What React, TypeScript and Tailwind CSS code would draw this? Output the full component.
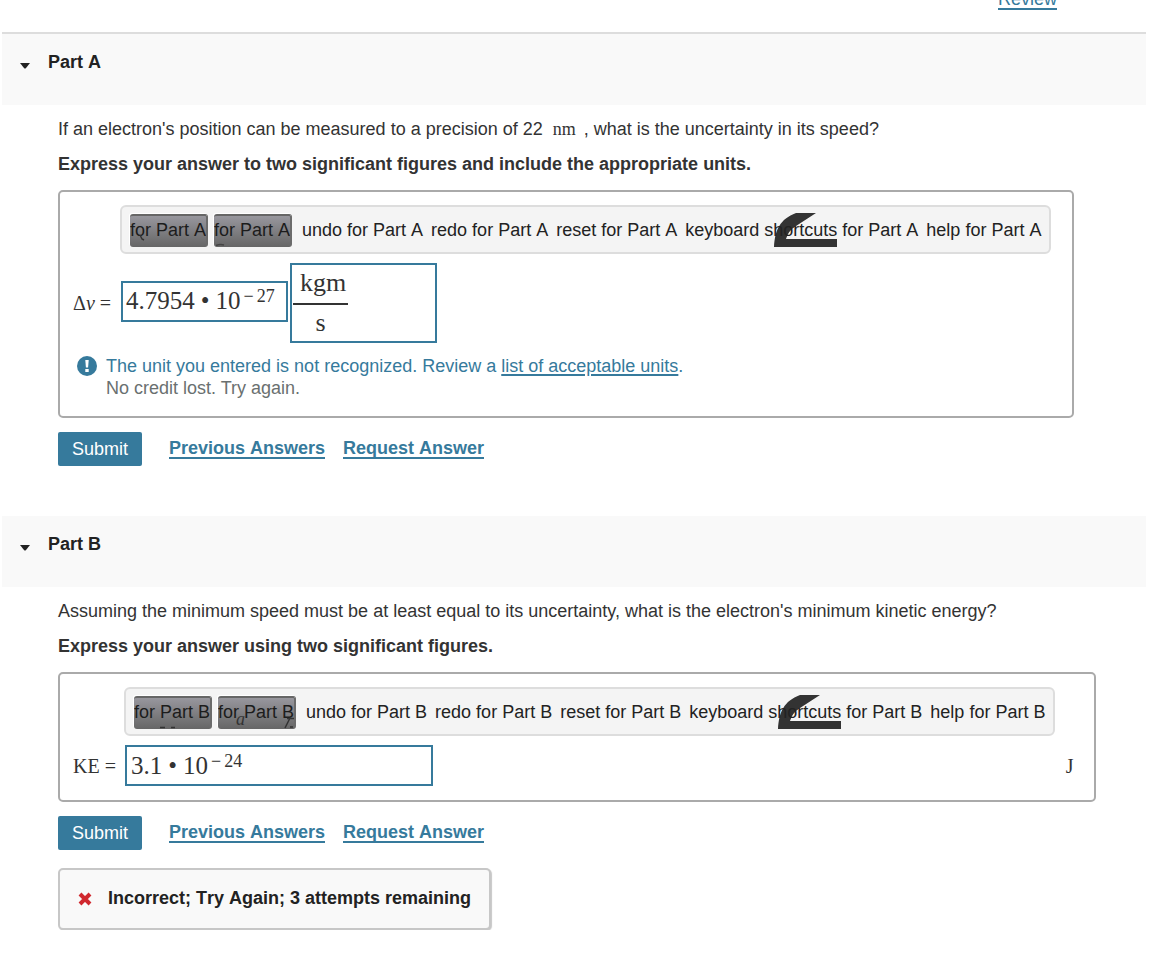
import React, { useState } from 'react';

const serif = "font-['Liberation_Serif',serif]";

const toolbarText = 'relative cursor-pointer whitespace-nowrap';
const templateButton =
  'relative h-[33px] w-[78px] cursor-pointer overflow-hidden whitespace-nowrap rounded-[3px] border-t-2 border-r-2 border-t-[#666666] border-r-[#6b6b6b] bg-gradient-to-b from-[#98979e] to-[#666666] pb-[2px] text-left leading-[27px] text-[#1c1c1c] shadow-[-1px_-1px_0_#ffffff]';

const Toolbar: React.FC<{ part: 'A' | 'B' }> = ({ part }) => (
  <div
    role="toolbar"
    aria-label={`Answer tools for Part ${part}`}
    className="flex h-[49px] w-fit items-start rounded-[6px] border-2 border-[#dddddd] bg-[#f4f4f4] px-2 pt-[7px] text-[#222222] [font-kerning:none]"
  >
    <button type="button" className={`${templateButton} mr-[6px]`}>
      for Part {part}
      <svg className="absolute inset-0" width="76" height="31" fill="none" stroke="#333" strokeWidth="1.5" aria-hidden="true">
        {part === 'A' ? <path d="M10 19l2 4 2 1" /> : <path d="M26 29.500h5M37 29.500h4" />}
      </svg>
    </button>
    <button type="button" className={`${templateButton} mr-[10px]`}>
      for Part {part}
      {part === 'A' ? (
        <svg className="absolute inset-0" width="76" height="31" fill="none" stroke="#444" strokeWidth="1.5" aria-hidden="true">
          <path d="M2 29.500q4-1.500 8-0.500" />
        </svg>
      ) : (
        <>
          <i className={`absolute top-[8px] left-[18px] text-[#333333] ${serif}`} aria-hidden="true">a</i>
          <svg className="absolute inset-0" width="76" height="31" fill="none" stroke="#333" strokeWidth="1.5" aria-hidden="true">
            <path d="M67 30l5-10M69 20.500h7M72 29h3" />
          </svg>
        </>
      )}
    </button>
    <div className="flex gap-2 leading-[33px]">
      <button type="button" className={toolbarText}>undo for Part {part}</button>
      <button type="button" className={toolbarText}>redo for Part {part}</button>
      <button type="button" className={toolbarText}>reset for Part {part}</button>
      <button type="button" className={toolbarText}>
        <svg className="absolute top-[-1px] left-[89px]" width="63" height="34" fill="#333333" aria-hidden="true">
          <path d="M0 34C1 17 6 6 22 0H42L22 13Q14 18 12 26H63V34Z" />
        </svg>
        <span className="relative">keyboard shortcuts for Part {part}</span>
      </button>
      <button type="button" className={toolbarText}>help for Part {part}</button>
    </div>
  </div>
);

const ScientificValue: React.FC<{ base: string; exponent: string }> = ({ base, exponent }) => (
  <span className="flex items-baseline">
    <span>{base}</span>
    <span className="mx-[6px]">•</span>
    <span>10</span>
    <sup className="top-[-7px] ml-[3px] flex gap-[3px] text-[18px] leading-none">
      <span>−</span>
      <span>{exponent}</span>
    </sup>
  </span>
);

const PartSection: React.FC<{ title: string; first?: boolean; children: React.ReactNode }> = ({ title, first, children }) => {
  const [open, setOpen] = useState(true);

  return (
    <section className={first ? 'border-t-2 border-[#dddddd]' : 'mt-[50px]'}>
      <h2 className="h-[71px] bg-[#f9f9f9] pt-[17px] pl-[18px]">
        <button
          type="button"
          aria-expanded={open}
          onClick={() => setOpen(!open)}
          className="flex cursor-pointer items-center gap-[18px] font-bold text-[#222222] [font-kerning:none]"
        >
          <svg className="mt-[8px]" width="10" height="6" aria-hidden="true">
            <path d="M0 0H10L6 5Q5 6 4 5Z" fill="#222222" />
          </svg>
          {title}
        </button>
      </h2>
      {open && <div className="pt-[13px] pl-[56px]">{children}</div>}
    </section>
  );
};

const link = 'border-b-2 border-[#367a9c] text-[#367a9c] leading-[18px]';

const Actions: React.FC = () => (
  <div className="mt-[14px] flex items-start">
    <button type="button" className="h-[34px] w-[84px] cursor-pointer rounded-[2px] bg-[#367a9c] text-white">
      Submit
    </button>
    <div className="mt-[7px] ml-[27px] flex gap-[18px] font-bold [font-kerning:none]">
      <a href="#previous" className={link}>Previous Answers</a>
      <a href="#request" className={link}>Request Answer</a>
    </div>
  </div>
);

const answerBox = 'w-fit rounded-[5px] border-2 border-[#aaaaaa] pt-[13px] pr-[21px] pl-[13px]';
const mathField = `border-2 border-[#367a9c] bg-white text-[#333333] ${serif}`;

export default function App() {
  return (
    <main className="mr-[30px] ml-[2px] font-['Liberation_Sans',Arial,sans-serif] text-[18px] leading-[22px] text-[#333333]">
      <div className="flex h-[32px] items-start justify-end overflow-hidden pr-[89px]">
        <a href="#review" className={`-mt-[10px] ${link}`}>Review</a>
      </div>

      <PartSection title="Part A" first>
        <p>
          If an electron's position can be measured to a precision of 22
          <span className={`mx-[8px] pl-[2px] ${serif}`}>nm</span>, what is the uncertainty in its speed?
        </p>
        <p className="mt-[13px] mb-[15px] font-bold">
          Express your answer to two significant figures and include the appropriate units.
        </p>
        <div className={`${answerBox} pb-[17px]`}>
          <div className="pl-[47px]">
            <Toolbar part="A" />
          </div>
          <div className="mt-[9px] flex items-center">
            <span id="label-a" className={`w-[48px] text-[20px] ${serif}`}>
              Δ<i>v</i> =
            </span>
            <div role="textbox" tabIndex={0} aria-labelledby="label-a" className={`mb-1 flex h-[41px] w-[167px] items-center pl-[3px] text-[25px] ${mathField}`}>
              <ScientificValue base="4.7954" exponent="27" />
            </div>
            <div role="textbox" tabIndex={0} aria-label="Units" className={`ml-[2px] h-[80px] w-[147px] pl-[1px] text-[26px] ${mathField}`}>
              <div className="flex w-fit flex-col items-center leading-[35px]">
                <span className="h-[40px] border-b-2 border-[#333333] pr-[2px] pl-[7px]">kgm</span>
                <span>s</span>
              </div>
            </div>
          </div>
          <div className="mt-[12px] flex pl-[4px]">
            <svg className="mt-[1px] mr-[9px]" width="20" height="20" aria-hidden="true">
              <circle cx="10" cy="10" r="10" fill="#367a9c" />
              <path d="M8.300 4h3.400l-.6 7.500H8.900z" fill="white" />
              <rect x="8.300" y="13" width="3.400" height="3" fill="white" />
            </svg>
            <div>
              <p className="text-[#367a9c]">
                The unit you entered is not recognized. Review a{' '}
                <a href="#units" className="underline decoration-2 underline-offset-2">list of acceptable units</a>.
              </p>
              <p className="text-[#6a7070]">No credit lost. Try again.</p>
            </div>
          </div>
        </div>
        <Actions />
      </PartSection>

      <PartSection title="Part B">
        <p>Assuming the minimum speed must be at least equal to its uncertainty, what is the electron's minimum kinetic energy?</p>
        <p className="mt-[13px] mb-[15px] font-bold">Express your answer using two significant figures.</p>
        <div className={`${answerBox} pb-[14px]`}>
          <div className="pr-[18px] pl-[51px]">
            <Toolbar part="B" />
          </div>
          <div className="mt-[9px] flex items-center">
            <span id="label-b" className={`w-[52px] text-[20px] ${serif}`}>KE =</span>
            <div role="textbox" tabIndex={0} aria-labelledby="label-b" className={`flex h-[41px] w-[308px] items-center pl-[4px] text-[25px] ${mathField}`}>
              <ScientificValue base="3.1" exponent="24" />
            </div>
            <span className={`ml-auto text-[20px] ${serif}`}>J</span>
          </div>
        </div>
        <Actions />
        <div
          role="status"
          className="mt-[18px] flex h-[62px] w-fit items-center rounded-[5px] border-2 border-[#c7c7c7] bg-[#f9f9f9] pr-[18px] pb-[2px] pl-[18px] font-bold text-[#222222] shadow-[1px_1px_1px_#c7c7c7] [font-kerning:none]"
        >
          <svg className="mt-[2px] mr-[16px]" width="14" height="14" aria-hidden="true">
            <path d="M2 2l10 10M12 2l-10 10" stroke="#d0282e" strokeWidth="4" />
          </svg>
          Incorrect; Try Again; 3 attempts remaining
        </div>
      </PartSection>
    </main>
  );
}
